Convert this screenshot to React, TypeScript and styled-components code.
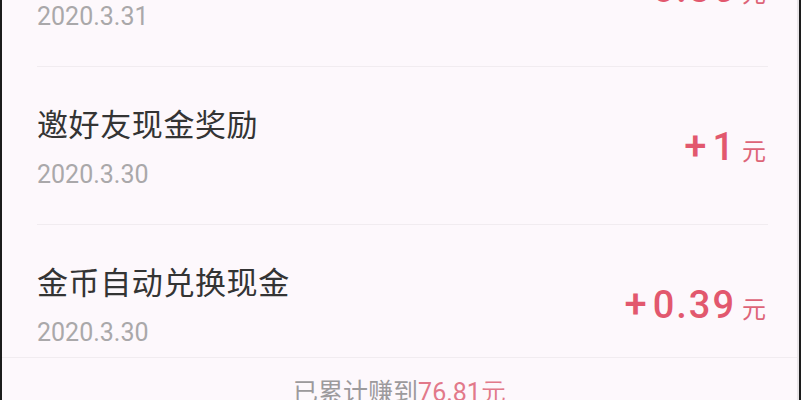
import styled, { createGlobalStyle } from "styled-components";

const GlobalStyle = createGlobalStyle`
  html, body {
    margin: 0;
    padding: 0;
    height: 100%;
    overflow: hidden;
    background: #1c1c1c;
  }
  #root {
    height: 100%;
  }
`;

const Screen = styled.div`
  margin-left: 2px;
  width: 795px;
  height: 400px;
  background: #fdf8fc;
  border-right: 2px solid #e9e5e8;
  overflow: hidden;
  font-family: "Noto Sans CJK SC", Roboto, sans-serif;
`;

const List = styled.div`
  display: flex;
  flex-direction: column;
  margin-top: -91px;
`;

const Row = styled.div<{ $last?: boolean }>`
  display: flex;
  align-items: center;
  justify-content: space-between;
  margin: 0 29px 0 35px;
  padding: 36px 0 ${(p) => (p.$last ? "9px" : "34px")};
  border-bottom: ${(p) => (p.$last ? "none" : "1px solid #f1ecf0")};
`;

const Info = styled.div`
  display: flex;
  flex-direction: column;
  gap: 17px;
`;

const Title = styled.div`
  font-size: 31px;
  line-height: 40px;
  letter-spacing: 0.6px;
  color: #343434;
`;

const DateText = styled.div`
  font-family: Roboto, "Liberation Sans", sans-serif;
  font-size: 25px;
  line-height: 30px;
  color: #aaa8aa;
`;

const Amount = styled.div`
  display: flex;
  align-items: baseline;
  color: #e2586e;
  font-family: Roboto, "Liberation Sans", sans-serif;
  font-weight: 500;
`;

const Plus = styled.span`
  font-size: 40px;
  margin-right: 6px;
`;

const Value = styled.span`
  font-size: 38px;
  letter-spacing: 2px;
`;

const Unit = styled.span`
  font-family: "Noto Sans CJK SC", sans-serif;
  font-weight: 400;
  font-size: 24px;
  margin: 0 2px 0 6px;
  color: #dd6478;
`;

const Footer = styled.div`
  border-top: 1px solid #f1ecf0;
  padding-top: 17px;
  text-align: center;
  font-size: 25px;
  line-height: 30px;
  color: #9c9a9c;
`;

const Total = styled.span`
  color: #e2798a;
  font-family: Roboto, "Liberation Sans", sans-serif;
`;

const records = [
  { title: "金币自动兑换现金", date: "2020.3.31", value: "0.36" },
  { title: "邀好友现金奖励", date: "2020.3.30", value: "1" },
  { title: "金币自动兑换现金", date: "2020.3.30", value: "0.39" },
];

export default function App() {
  return (
    <>
      <GlobalStyle />
      <Screen>
        <List>
          {records.map((r, i) => (
            <Row key={i} $last={i === records.length - 1}>
              <Info>
                <Title>{r.title}</Title>
                <DateText>{r.date}</DateText>
              </Info>
              <Amount>
                <Plus>+</Plus>
                <Value>{r.value}</Value>
                <Unit>元</Unit>
              </Amount>
            </Row>
          ))}
        </List>
        <Footer>
          已累计赚到<Total>76.81元</Total>
        </Footer>
      </Screen>
    </>
  );
}
